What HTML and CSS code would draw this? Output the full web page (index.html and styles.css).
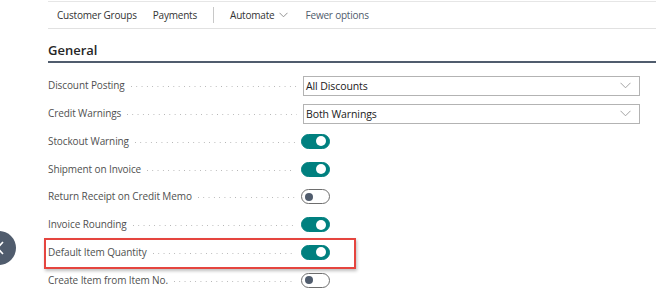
FILE: index.html
```html
<!DOCTYPE html>
<html lang="en">
<head>
    <meta charset="UTF-8">
    <title>Customer Setup - General</title>
    <link rel="stylesheet" href="styles.css">
</head>
<body>
    <div class="page">
        <div class="toolbar">
            <span class="action">Customer Groups</span>
            <span class="action">Payments</span>
            <span class="divider"></span>
            <span class="action">Automate
                <svg class="chev" width="9" height="6" viewBox="0 0 9 6"><path d="M0.5 0.8 L4.5 4.8 L8.5 0.8" fill="none" stroke="#888" stroke-width="0.9"/></svg>
            </span>
            <span class="action muted">Fewer options</span>
        </div>

        <h2 class="section">General</h2>

        <div class="fields">
            <div class="row">
                <span class="label">Discount Posting</span><span class="dots"></span>
                <div class="select">All Discounts
                    <svg class="chev" width="11" height="7" viewBox="0 0 11 7"><path d="M0.5 0.8 L5.5 5.8 L10.5 0.8" fill="none" stroke="#999" stroke-width="0.9"/></svg>
                </div>
            </div>
            <div class="row">
                <span class="label">Credit Warnings</span><span class="dots"></span>
                <div class="select">Both Warnings
                    <svg class="chev" width="11" height="7" viewBox="0 0 11 7"><path d="M0.5 0.8 L5.5 5.8 L10.5 0.8" fill="none" stroke="#999" stroke-width="0.9"/></svg>
                </div>
            </div>
            <div class="row">
                <span class="label">Stockout Warning</span><span class="dots"></span>
                <span class="toggle on"></span>
            </div>
            <div class="row">
                <span class="label">Shipment on Invoice</span><span class="dots"></span>
                <span class="toggle on"></span>
            </div>
            <div class="row">
                <span class="label">Return Receipt on Credit Memo</span><span class="dots"></span>
                <span class="toggle"></span>
            </div>
            <div class="row">
                <span class="label">Invoice Rounding</span><span class="dots"></span>
                <span class="toggle on"></span>
            </div>
            <div class="row marked">
                <span class="label">Default Item Quantity</span><span class="dots"></span>
                <span class="toggle on"></span>
            </div>
            <div class="row">
                <span class="label">Create Item from Item No.</span><span class="dots"></span>
                <span class="toggle"></span>
            </div>
        </div>
    </div>

    <div class="nav-back">
        <svg width="8" height="14" viewBox="0 0 8 14"><path d="M7 1 L1.5 7 L7 13" fill="none" stroke="#fff" stroke-width="1.6"/></svg>
    </div>
</body>
</html>
```

FILE: styles.css
```css
body {
    margin: 0;
    background: #fff;
    font-family: "Open Sans", "Noto Sans", sans-serif;
    color: #505050;
    overflow: hidden;
}
.page {
    padding-left: 48px;
    padding-top: 1px;
}
.toolbar {
    display: flex;
    align-items: center;
    height: 26px;
    border-top: 1px solid #e6e6e6;
    border-bottom: 1px solid #e1e1e1;
    padding-left: 9px;
    font-size: 10px;
    letter-spacing: -0.2px;
    color: #333;
}
.action {
    display: flex;
    align-items: center;
    margin-right: 16px;
    white-space: nowrap;
}
.action .chev {
    margin-left: 4px;
    margin-right: 2px;
}
.muted {
    color: #505c6d;
}
.divider {
    width: 1px;
    height: 16px;
    background: #c8c8c8;
    margin-right: 16px;
}
.section {
    margin: 0;
    height: 32px;
    line-height: 42px;
    font-size: 13px;
    font-weight: 600;
    color: #262626;
    border-bottom: 2px solid #505c6d;
}
.fields {
    margin-top: 9px;
}
.row {
    position: relative;
    display: flex;
    align-items: center;
    height: 27.75px;
    font-size: 10px;
    letter-spacing: -0.1px;
}
.label {
    white-space: nowrap;
    color: #505050;
    margin-top: -1px;
}
.dots {
    flex: 1;
    min-width: 0;
    height: 1px;
    margin: 2px 6px 0 6px;
    background-image: linear-gradient(to right, #b4b4b4 1px, transparent 1px);
    background-size: 5.3px 1px;
}
.select {
    flex: none;
    width: 337px;
    height: 20px;
    border: 1px solid #b3b3b3;
    display: flex;
    align-items: center;
    justify-content: space-between;
    padding: 0 8px 0 2px;
    box-sizing: border-box;
    margin-right: 16px;
    color: #212121;
    font-size: 10.5px;
}
.toggle {
    flex: none;
    position: relative;
    width: 29px;
    height: 15px;
    box-sizing: border-box;
    border-radius: 8px;
    border: 1px solid #6e6e6e;
    background: #fff;
    margin-right: 326px;
}
.toggle::after {
    content: "";
    position: absolute;
    top: 2.5px;
    left: 3px;
    width: 8px;
    height: 8px;
    border-radius: 50%;
    background: #505c6d;
}
.toggle.on {
    background: #00807f;
    border-color: #00807f;
}
.toggle.on::after {
    left: auto;
    right: 3px;
    top: 1.5px;
    width: 10px;
    height: 10px;
    background: #fff;
}
.marked::before {
    content: "";
    position: absolute;
    left: -4px;
    top: -1px;
    width: 308px;
    height: 27px;
    border: 2px solid #e5453f;
    box-shadow: 1px 2px 3px rgba(0, 0, 0, 0.25);
}
.nav-back {
    position: absolute;
    left: -18px;
    top: 231px;
    width: 34px;
    height: 34px;
    border-radius: 50%;
    background: #505c6d;
    display: flex;
    align-items: center;
    justify-content: flex-end;
}
.nav-back svg {
    margin-right: 12px;
}
```
